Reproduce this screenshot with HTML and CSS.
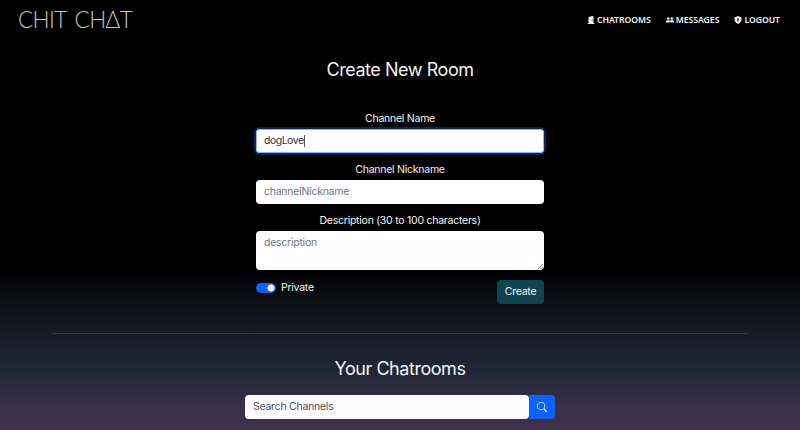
FILE: index.html
```html
<!DOCTYPE html>
<html lang="en">
<head>
<meta charset="utf-8">
<title>Chit Chat</title>
<link rel="stylesheet" href="styles.css">
</head>
<body>
<header class="navbar">
  <a class="brand">CHIT CH<span class="delta">Δ</span>T</a>
  <nav class="links">
    <a class="link"><svg class="icon" viewBox="0 0 16 16"><path fill-rule="evenodd" d="M12 0a1 1 0 0 1 1 1v13h1.500v2h-13v-2H3V2zM9.500 7v2.500H11V7z"/></svg>CHATROOMS</a>
    <a class="link"><svg class="icon" viewBox="0 0 16 16"><circle cx="4.500" cy="5" r="2.500"/><circle cx="11.500" cy="5" r="2.500"/><path d="M0 13v-1.500C0 9.500 2 8.500 4.500 8.500S8 9.500 8 9.500s1-1 3.500-1 4.500 1 4.500 3V13H8.800v-1.700h-1.600V13z"/></svg>MESSAGES</a>
    <a class="link"><svg class="icon" viewBox="0 0 16 16"><path fill-rule="evenodd" d="M8 0C6.500 1 4 2 1 2.300.3 8 1.500 12.500 8 16c6.500-3.500 7.700-8 7-13.700C12 2 9.500 1 8 0zm0 4.500a2 2 0 0 1 1 3.500l.4 3H6.600L7 8a2 2 0 0 1 1-3.500z"/></svg>LOGOUT</a>
  </nav>
</header>
<main class="page">
  <h1 class="title">Create New Room</h1>
  <form class="form">
    <label class="label">Channel Name</label>
    <div class="field focused">dogLove<span class="caret"></span></div>
    <label class="label">Channel Nickname</label>
    <div class="field placeholder">channelNickname</div>
    <label class="label">Description (30 to 100 characters)</label>
    <div class="field placeholder area">description<svg class="grip" viewBox="0 0 8 8"><path d="M1 7 7 1M4.500 7 7 4.500"/></svg></div>
    <div class="actions">
      <span class="toggle"><span class="switch"></span>Private</span>
      <button class="create" type="button">Create</button>
    </div>
  </form>
  <hr class="rule">
  <h2 class="title rooms">Your Chatrooms</h2>
  <div class="search">
    <div class="query">Search Channels</div>
    <button class="go" type="button" aria-label="Search"><svg class="lens" viewBox="0 0 16 16"><path d="M11.742 10.344a6.500 6.500 0 1 0-1.397 1.398l3.850 3.850a1 1 0 0 0 1.415-1.414zM12 6.500a5.500 5.500 0 1 1-11 0 5.500 5.500 0 0 1 11 0"/></svg></button>
  </div>
</main>
</body>
</html>
```
FILE: styles.css
```css
* { box-sizing: border-box; }
body {
  margin: 0;
  height: 430px;
  overflow: hidden;
  color: #f4f4f6;
  font: 10.500px/16px Inter, sans-serif;
  letter-spacing: -.25px;
  background: linear-gradient(#000 0, #000 268px, #0c0e13 300px, #171b25 335px, #202837 372px, #2c2b3f 390px, #3b314b 407px, #3d314c 430px);
}
.navbar {
  height: 40px;
  padding: 0 20px 0 18px;
  display: flex;
  align-items: center;
  justify-content: space-between;
}
.brand {
  font: 300 22.500px/40px Lato, sans-serif;
  white-space: nowrap;
  letter-spacing: -.6px;
  word-spacing: 3px;
  color: #c4c4c4;
}
.links { display: flex; gap: 15px; }
.link {
  display: flex;
  align-items: center;
  gap: 2px;
  font: 600 8.600px/16px "Noto Sans", sans-serif;
  letter-spacing: 0;
}
.icon { width: 8px; height: 8px; fill: currentColor; }
.page { display: flex; flex-direction: column; align-items: center; }
.title {
  margin: 18px 0 0;
  font-size: 18px;
  line-height: 24px;
  font-weight: 400;
  letter-spacing: -.45px;
}
.form { width: 288px; margin-top: 29px; display: flex; flex-direction: column; }
.label { line-height: 16px; text-align: center; margin-bottom: 2px; }
.field {
  height: 24px;
  margin-bottom: 9px;
  padding: 4px 8px 3px;
  border-radius: 4px;
  background: #fffdff;
  color: #34373b;
  display: flex;
}
.focused { box-shadow: inset 0 0 0 1px #8ab6ee, 0 0 0 2px #06245a; letter-spacing: -.5px; }
.caret { width: 1px; height: 12px; margin-top: 2px; background: #505358; }
.placeholder { color: #74777c; }
.area { height: 39px; position: relative; }
.grip { position: absolute; right: 0; bottom: 0; width: 7px; height: 7px; fill: none; stroke: #555; stroke-width: .8; }
.actions { display: flex; justify-content: space-between; align-items: flex-start; margin-top: 1px; }
.toggle { display: flex; align-items: center; gap: 5px; }
.switch { width: 20px; height: 10px; border-radius: 5px; background: radial-gradient(circle at 15px 5px, #fff 3.200px, #0d63f8 3.800px); }
.create {
  width: 47px;
  height: 24px;
  padding: 0;
  border: 0;
  border-radius: 4px;
  background: #104450;
  color: #f4f4f6;
  font: inherit;
  letter-spacing: inherit;
}
.rule { width: 696px; height: 1px; margin: 29px 0 0; border: 0; background: #343944; }
.rooms { margin-top: 23px; }
.search { width: 310px; height: 24px; margin-top: 14px; display: flex; }
.query { flex: 1; padding: 4px 8px; border-radius: 4px; background: #fffdff; color: #505358; }
.go {
  width: 26px;
  padding: 0;
  border: 0;
  border-radius: 0 4px 4px 0;
  background: #0d63f8;
  display: flex;
  align-items: center;
  justify-content: center;
}
.lens { width: 10px; height: 10px; fill: #fff; }
```
